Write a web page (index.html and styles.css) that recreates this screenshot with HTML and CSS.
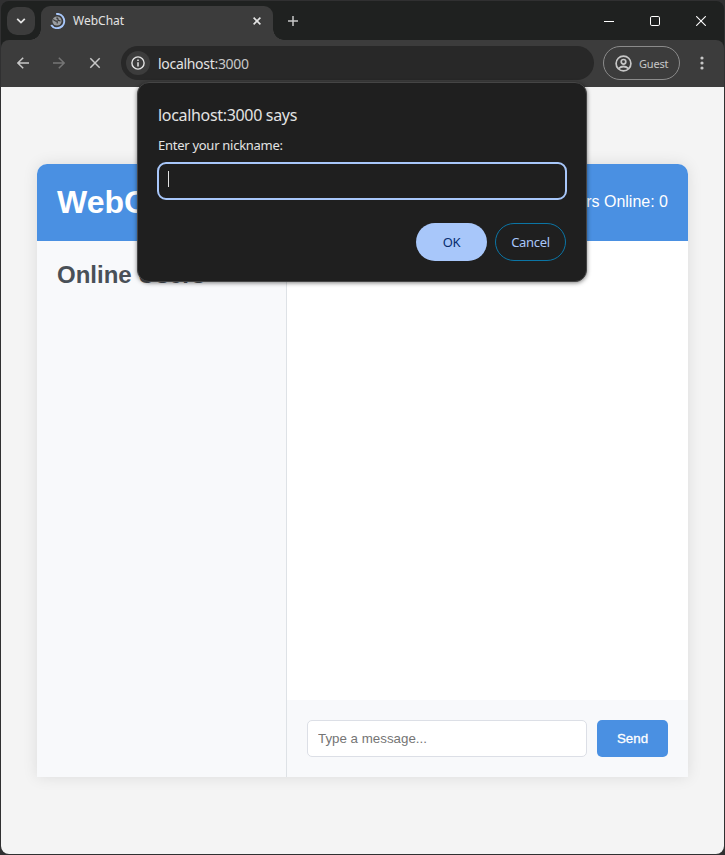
FILE: index.html
```html
<!DOCTYPE html>
<html lang="en">
<head>
<meta charset="utf-8">
<title>WebChat</title>
<link rel="stylesheet" href="styles.css">
</head>
<body>
<div class="window">
  <header class="tabstrip">
    <div class="tab-search">
      <svg width="10" height="6" viewBox="0 0 10 6"><path d="M1.2 .9 5 4.6 8.8 .9" fill="none" stroke="#e3e3e3" stroke-width="1.8"/></svg>
    </div>
    <div class="tab">
      <svg class="spinner" width="16" height="16" viewBox="0 0 16 16">
        <circle cx="7" cy="8" r="4.6" fill="#9a9da1"/>
        <path d="M3.2 6.6 5.8 8.2H7.2V10.6M6.2 5.2H7.6L8.4 7.4 10.6 8" fill="none" stroke="#3c3c3c" stroke-width="1.2"/>
        <path d="M6.2 1A7.1 7.1 0 1 1 1.2 12" fill="none" stroke="#a8c7fa" stroke-width="2"/>
      </svg>
      <span class="tab-title">WebChat</span>
      <svg class="tab-close" width="8" height="8" viewBox="0 0 8 8"><path d="M.6 .6 7.4 7.4M7.4 .6 .6 7.4" stroke="#e3e3e3" stroke-width="1.6"/></svg>
    </div>
    <svg class="new-tab" width="10" height="10" viewBox="0 0 10 10"><path d="M5 0V10M0 5H10" stroke="#c7c7c7" stroke-width="1.5"/></svg>
    <div class="controls">
      <svg width="10" height="10" viewBox="0 0 10 10"><path d="M0 5.5H10" stroke="#fff"/></svg>
      <svg width="10" height="10" viewBox="0 0 10 10"><rect x=".5" y=".5" width="9" height="9" rx="1.3" fill="none" stroke="#fff"/></svg>
      <svg width="10" height="10" viewBox="0 0 10 10"><path d="M.2 .2 9.8 9.8M9.8 .2 .2 9.8" stroke="#fff" stroke-width="1.1"/></svg>
    </div>
  </header>
  <nav class="toolbar">
    <svg class="nav-icon" width="12" height="12" viewBox="0 0 12 12"><path d="M12 6H1.2M6.2 .7 .9 6 6.2 11.3" fill="none" stroke="#c7c7c7" stroke-width="1.5"/></svg>
    <svg class="nav-icon" width="12" height="12" viewBox="0 0 12 12"><path d="M0 6H10.8M5.8 .7 11.1 6 5.8 11.3" fill="none" stroke="#757575" stroke-width="1.5"/></svg>
    <svg class="nav-icon" width="12" height="12" viewBox="0 0 12 12"><path d="M1.3 1.3 10.7 10.7M10.7 1.3 1.3 10.7" stroke="#c7c7c7" stroke-width="1.5"/></svg>
    <div class="address">
      <span class="site-info">
        <svg width="14" height="14" viewBox="0 0 14 14"><circle cx="7" cy="7" r="6.1" fill="none" stroke="#e3e3e3" stroke-width="1.4"/><path d="M7 6.3V10.4M7 3.6V5.1" stroke="#e3e3e3" stroke-width="1.5"/></svg>
      </span>
      <span class="url">localhost<span class="port">:3000</span></span>
    </div>
    <div class="profile">
      <svg width="17" height="17" viewBox="0 0 17 17" fill="none" stroke="#c7c7c7" stroke-width="1.7"><circle cx="8.5" cy="8.5" r="7.4"/><circle cx="8.5" cy="6.8" r="2.3"/><path d="M3.4 13.6Q8.5 9.4 13.6 13.6"/></svg>
      <span>Guest</span>
    </div>
    <svg class="menu" width="4" height="14" viewBox="0 0 4 14" fill="#c7c7c7"><circle cx="2" cy="2" r="1.6"/><circle cx="2" cy="7" r="1.6"/><circle cx="2" cy="12" r="1.6"/></svg>
  </nav>
  <main class="page">
    <div class="chat">
      <div class="chat-header"><h1>WebChat</h1><span>Users Online: 0</span></div>
      <div class="chat-body">
        <aside class="users"><h2>Online Users</h2></aside>
        <section class="conversation">
          <div class="messages"></div>
          <form class="composer">
            <input type="text" placeholder="Type a message...">
            <button type="button">Send</button>
          </form>
        </section>
      </div>
    </div>
  </main>
</div>
<div class="dialog">
  <div class="dialog-title">localhost:3000 says</div>
  <div class="dialog-text">Enter your nickname:</div>
  <div class="dialog-field"><span class="caret"></span></div>
  <div class="dialog-actions"><span class="pill ok">OK</span><span class="pill cancel">Cancel</span></div>
</div>
</body>
</html>
```
FILE: styles.css
```css
* { box-sizing: border-box; }
html, body { margin: 0; height: 100%; }
body {
  padding: 1px;
  background: #303031;
  overflow: hidden;
  font-family: "Noto Sans", sans-serif;
}
svg { display: block; flex: none; }
.window {
  height: 853px;
  display: flex;
  flex-direction: column;
  border-radius: 8px;
  overflow: hidden;
  background: #1f2120;
}
.tabstrip {
  height: 39px;
  flex: none;
  display: flex;
  align-items: center;
  padding-left: 6px;
}
.tab-search {
  width: 28px;
  height: 28px;
  border-radius: 10px;
  background: #3c3c3c;
  display: flex;
  align-items: center;
  justify-content: center;
}
.tab {
  position: relative;
  align-self: flex-end;
  width: 232px;
  height: 34px;
  margin-left: 6px;
  padding: 0 12px 5px 9px;
  border-radius: 9px 9px 0 0;
  background: #3c3c3c;
  display: flex;
  align-items: center;
}
.tab::before, .tab::after {
  content: "";
  position: absolute;
  bottom: 0;
  width: 11px;
  height: 11px;
}
.tab::before { left: -11px; background: radial-gradient(circle at 0 0, transparent 10.5px, #3c3c3c 11px); }
.tab::after { right: -11px; background: radial-gradient(circle at 100% 0, transparent 10.5px, #3c3c3c 11px); }
.tab-title { margin-left: 7px; font-size: 12px; color: #e3e3e3; }
.tab-close { margin-left: auto; }
.new-tab { margin-left: 15px; }
.controls { display: flex; gap: 36px; margin: 0 18px 0 auto; }
.toolbar {
  height: 47px;
  flex: none;
  display: flex;
  align-items: center;
  padding: 0 20px 1px 16px;
  border-radius: 8px 8px 0 0;
  background: #3c3c3c;
}
.nav-icon { margin-right: 24px; }
.address {
  width: 473px;
  height: 34px;
  margin-left: -4px;
  padding-left: 5px;
  border-radius: 17px;
  background: #282828;
  display: flex;
  align-items: center;
}
.site-info {
  width: 24px;
  height: 24px;
  border-radius: 12px;
  background: #3c3c3c;
  display: flex;
  align-items: center;
  justify-content: center;
}
.url { margin-left: 8px; font-size: 14px; letter-spacing: -.3px; color: #e3e3e3; }
.port { color: #c7c7c7; }
.profile {
  width: 77px;
  height: 34px;
  margin-left: 9px;
  padding-left: 11px;
  border: 1px solid #8b8b8b;
  border-radius: 17px;
  display: flex;
  align-items: center;
  gap: 7px;
  font-size: 11px;
  letter-spacing: -.2px;
  color: #c7c7c7;
}
.menu { margin-left: auto; }
.page {
  flex: 1;
  background: #f4f4f4;
  padding: 77px 36px;
  font-family: "Liberation Sans", Arial, sans-serif;
}
.chat {
  height: 613px;
  display: flex;
  flex-direction: column;
  border-radius: 10px 10px 0 0;
  background: #fff;
  box-shadow: 0 0 15px rgba(0, 0, 0, .1);
}
.chat-header {
  height: 77px;
  padding: 0 20px;
  border-radius: 10px 10px 0 0;
  background: #4a90e2;
  color: #fff;
  display: flex;
  align-items: center;
  justify-content: space-between;
  font-size: 16px;
}
.chat-header h1 { margin: 0; font-size: 32px; line-height: 37px; }
.chat-header span { padding-bottom: 2px; }
.chat-body { flex: 1; display: flex; }
.users {
  width: 250px;
  padding: 20px;
  border-right: 1px solid #dee2e6;
  background: #f8f9fb;
}
.users h2 { margin: 0; font-size: 24px; line-height: 28px; color: #495057; }
.conversation { flex: 1; display: flex; flex-direction: column; }
.messages { flex: 1; }
.composer {
  height: 77px;
  margin: 0;
  padding: 20px;
  background: #f8f9fb;
  display: flex;
  gap: 10px;
}
.composer input {
  flex: 1;
  min-width: 0;
  height: 37px;
  padding: 0 10px;
  border: 1px solid #dcdfe6;
  border-radius: 5px;
  background: #fff;
  font: 13.333px "Liberation Sans", Arial, sans-serif;
}
.composer input::placeholder { color: #757575; }
.composer button {
  width: 71px;
  height: 37px;
  padding: 0;
  border: 0;
  border-radius: 5px;
  background: #4a90e2;
  color: #fff;
  font: 13.333px "Liberation Sans", Arial, sans-serif;
  -webkit-text-stroke: .3px #fff;
}
.dialog {
  position: absolute;
  left: 137px;
  top: 82px;
  width: 450px;
  height: 200px;
  padding: 20px 20px 0;
  border: 1px solid #454545;
  border-radius: 12px;
  background: #1f1f1f;
  box-shadow: 0 1px 4px rgba(0, 0, 0, .5);
  color: #e3e3e3;
}
.dialog-title { font-size: 16px; line-height: 24px; letter-spacing: -.32px; }
.dialog-text { margin-top: 8px; font-size: 13px; line-height: 20px; letter-spacing: -.27px; }
.dialog-field {
  height: 38px;
  width: 410px;
  margin: 7px -1px 0;
  padding: 7px 9px;
  border: 2px solid #a8c7fa;
  border-radius: 9px;
}
.caret { display: block; width: 1px; height: 16px; background: #e3e3e3; }
.dialog-actions { display: flex; justify-content: flex-end; gap: 8px; margin-top: 23px; }
.pill {
  width: 71px;
  height: 38px;
  border-radius: 19px;
  display: flex;
  align-items: center;
  justify-content: center;
  font-size: 13px;
  letter-spacing: -.3px;
}
.ok { background: #a8c7fa; color: #062e6f; }
.cancel { border: 1px solid #0b75a5; color: #a8c7fa; }
```
